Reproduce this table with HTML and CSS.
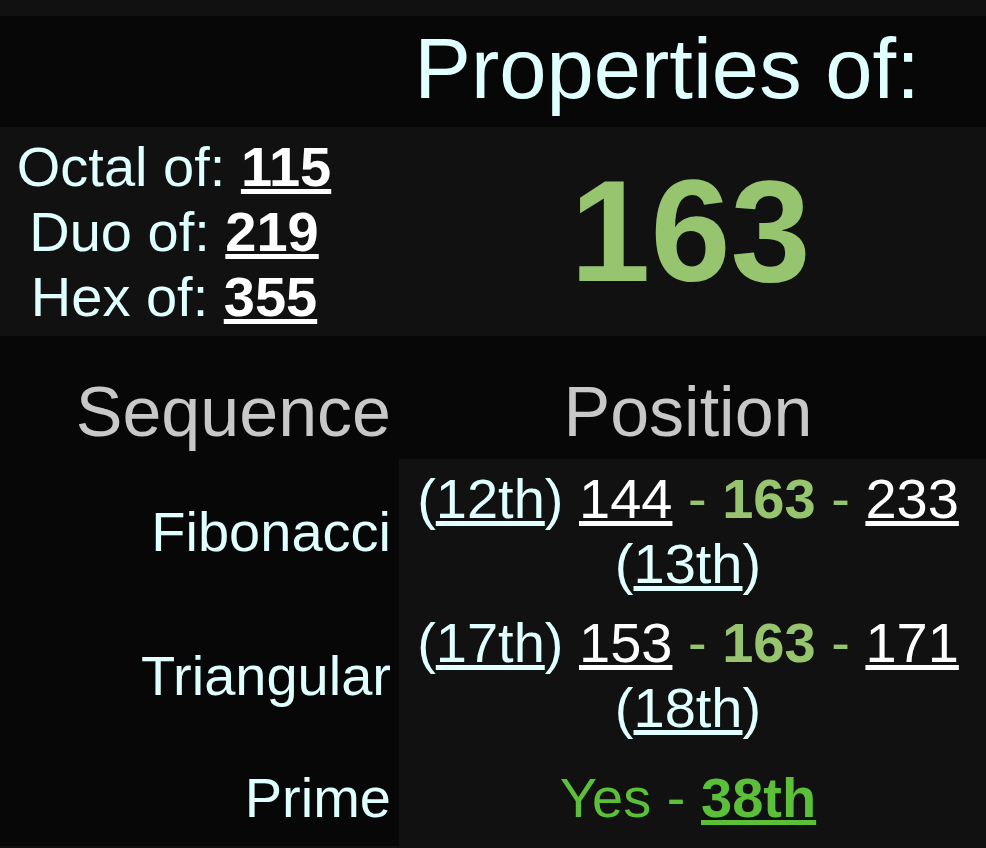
FILE: index.html
```html
<!DOCTYPE html>
<html lang="en">
<head>
  <meta charset="UTF-8" />
  <title>Properties of 163</title>
  <link rel="stylesheet" href="styles.css">
</head>
<body>

  <!-- Number summary -->
  <table class="summary">
    <tr class="title-row">
      <td class="blank"></td>
      <th class="title">Properties of:</th>
    </tr>
    <tr class="main-row">
      <td class="bases">
        <div>Octal of: <a href="#" class="base-num">115</a></div>
        <div>Duo of: <a href="#" class="base-num">219</a></div>
        <div>Hex of: <a href="#" class="base-num">355</a></div>
      </td>
      <td class="number">163</td>
    </tr>
  </table>

  <!-- Sequence positions -->
  <table class="sequences">
    <tr class="head-row">
      <th class="seq-head">Sequence</th>
      <th class="pos-head">Position</th>
    </tr>
    <tr>
      <td class="label">Fibonacci</td>
      <td class="pos">
        <span class="idx">(<a href="#">12th</a>)</span>
        <a href="#" class="val">144</a>
        <span class="sep">-</span>
        <b class="cur">163</b>
        <span class="sep">-</span>
        <a href="#" class="val">233</a>
        <span class="idx">(<a href="#">13th</a>)</span>
      </td>
    </tr>
    <tr>
      <td class="label">Triangular</td>
      <td class="pos">
        <span class="idx">(<a href="#">17th</a>)</span>
        <a href="#" class="val">153</a>
        <span class="sep">-</span>
        <b class="cur">163</b>
        <span class="sep">-</span>
        <a href="#" class="val">171</a>
        <span class="idx">(<a href="#">18th</a>)</span>
      </td>
    </tr>
    <tr class="prime-row">
      <td class="label">Prime</td>
      <td class="pos prime">Yes - <a href="#" class="prime-idx">38th</a></td>
    </tr>
  </table>

</body>
</html>
```

FILE: styles.css
```css
body {
  font-family: 'Liberation Sans', Arial, sans-serif;
  background-color: #111111;
  color: #e0ffff;
  margin: 0;
  padding: 16px 0 0;
}

table {
  width: 100%;
  border-collapse: collapse;
  border-spacing: 0;
}

td, th {
  padding: 7px;
  font-weight: normal;
}

a {
  color: inherit;
}

/* summary table */

.title-row td, .title-row th {
  background-color: #070707;
}

.blank {
  width: 334px;
}

.title {
  font-size: 85px;
  text-align: center;
  color: #e0ffff;
  padding: 4px 7px 9px;
}

.main-row td {
  background-color: #111111;
}

.bases {
  font-size: 56px;
  text-align: center;
  line-height: normal;
  padding: 7px;
}

.base-num {
  color: #ffffff;
  font-weight: bold;
}

.number {
  font-size: 144px;
  font-weight: bold;
  color: #97c46f;
  text-align: center;
  padding-left: 54px;
}

/* sequences table */

.sequences {
  background-color: #070707;
}

.head-row th {
  font-size: 70px;
  color: #c8c8c8;
  padding: 36px 7px 7px;
}

.seq-head {
  width: 384px;
  text-align: right;
  padding-right: 8px !important;
}

.pos-head {
  text-align: center;
  padding-right: 16px !important;
}

.label {
  font-size: 56px;
  text-align: right;
  vertical-align: middle;
  padding-right: 8px;
}

.pos {
  font-size: 56px;
  text-align: center;
  background-color: #111111;
  padding: 7px 16px 7px 7px;
}

.val {
  color: #ffffff;
}

.sep, .cur {
  color: #97c46f;
}

.prime-row td {
  padding-top: 18px;
  padding-bottom: 16px;
}

.prime {
  color: #5cbf3a;
}

.prime-idx {
  font-weight: bold;
}
```
